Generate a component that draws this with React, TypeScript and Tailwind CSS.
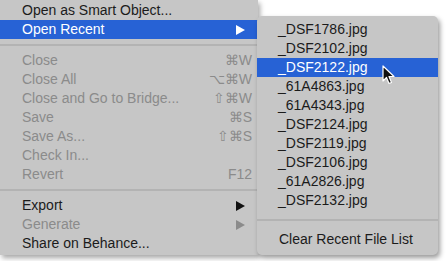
import React from "react"

type Item = {
  label?: string
  shortcut?: string
  disabled?: boolean
  active?: boolean
  submenu?: boolean
  separator?: boolean
}

const fileMenu: Item[] = [
  { label: "Open as Smart Object..." },
  { label: "Open Recent", submenu: true, active: true },
  { separator: true },
  { label: "Close", shortcut: "⌘W", disabled: true },
  { label: "Close All", shortcut: "⌥⌘W", disabled: true },
  { label: "Close and Go to Bridge...", shortcut: "⇧⌘W", disabled: true },
  { label: "Save", shortcut: "⌘S", disabled: true },
  { label: "Save As...", shortcut: "⇧⌘S", disabled: true },
  { label: "Check In...", disabled: true },
  { label: "Revert", shortcut: "F12", disabled: true },
  { separator: true },
  { label: "Export", submenu: true },
  { label: "Generate", submenu: true, disabled: true },
  { label: "Share on Behance..." },
]

const recent = [
  "_DSF1786.jpg",
  "_DSF2102.jpg",
  "_DSF2122.jpg",
  "_61A4863.jpg",
  "_61A4343.jpg",
  "_DSF2124.jpg",
  "_DSF2119.jpg",
  "_DSF2106.jpg",
  "_61A2826.jpg",
  "_DSF2132.jpg",
]

function Arrow({ color }: { color: string }) {
  return (
    <svg width="9" height="10" viewBox="0 0 9 10">
      <path d="M0 0 L9 5 L0 10 Z" fill={color} />
    </svg>
  )
}

function Cursor() {
  return (
    <svg width="13" height="20" viewBox="0 0 13 20" className="absolute left-[382px] top-[65px]">
      <path
        d="M1 1 L1 16 L4.5 12.5 L7 18.5 L9.5 17.5 L7 11.5 L12 11.5 Z"
        fill="#111"
        stroke="#fff"
        strokeWidth="1.2"
        strokeLinejoin="round"
      />
    </svg>
  )
}

export default function App() {
  return (
    <div
      className="relative w-[446px] h-[261px] overflow-hidden bg-white text-[14px] text-[#1b1b1b]"
      style={{ fontFamily: '"Liberation Sans", Arial, sans-serif' }}
    >
      {/* main File menu */}
      <div className="w-[258px] bg-[#c6c6c6] pt-px pb-[2px] shadow-[2px_3px_5px_rgba(0,0,0,0.35)]">
        {fileMenu.map((it, i) =>
          it.separator ? (
            <div key={i} className="h-[12px] flex items-center">
              <div className="w-full h-[2px] bg-[#b3b3b3]" />
            </div>
          ) : (
            <div
              key={i}
              className={`h-[19px] flex items-center pl-[22px] pr-[6px] ${
                it.active ? "bg-[#2762d5] text-white" : it.disabled ? "text-[#8b8b8b]" : ""
              }`}
            >
              <span className="flex-1 whitespace-nowrap">{it.label}</span>
              {it.shortcut && <span className="whitespace-nowrap">{it.shortcut}</span>}
              {it.submenu && (
                <span className="mr-[7px] flex items-center">
                  <Arrow color={it.active ? "#fff" : it.disabled ? "#8b8b8b" : "#111"} />
                </span>
              )}
            </div>
          )
        )}
      </div>

      {/* Open Recent submenu */}
      <div className="absolute left-[257px] top-[16px] w-[181px] rounded-[5px] bg-[#c6c6c6] pt-[4px] pb-[6px] shadow-[2px_3px_5px_rgba(0,0,0,0.4)]">
        {recent.map((f) => (
          <div
            key={f}
            className={`h-[19px] flex items-center pl-[21px] ${
              f === "_DSF2122.jpg" ? "bg-[#2762d5] text-white" : ""
            }`}
          >
            {f}
          </div>
        ))}
        <div className="h-[20px] flex items-center">
          <div className="w-full h-[2px] bg-[#b3b3b3]" />
        </div>
        <div className="h-[19px] flex items-center pl-[22px]">Clear Recent File List</div>
      </div>

      <Cursor />
    </div>
  )
}
